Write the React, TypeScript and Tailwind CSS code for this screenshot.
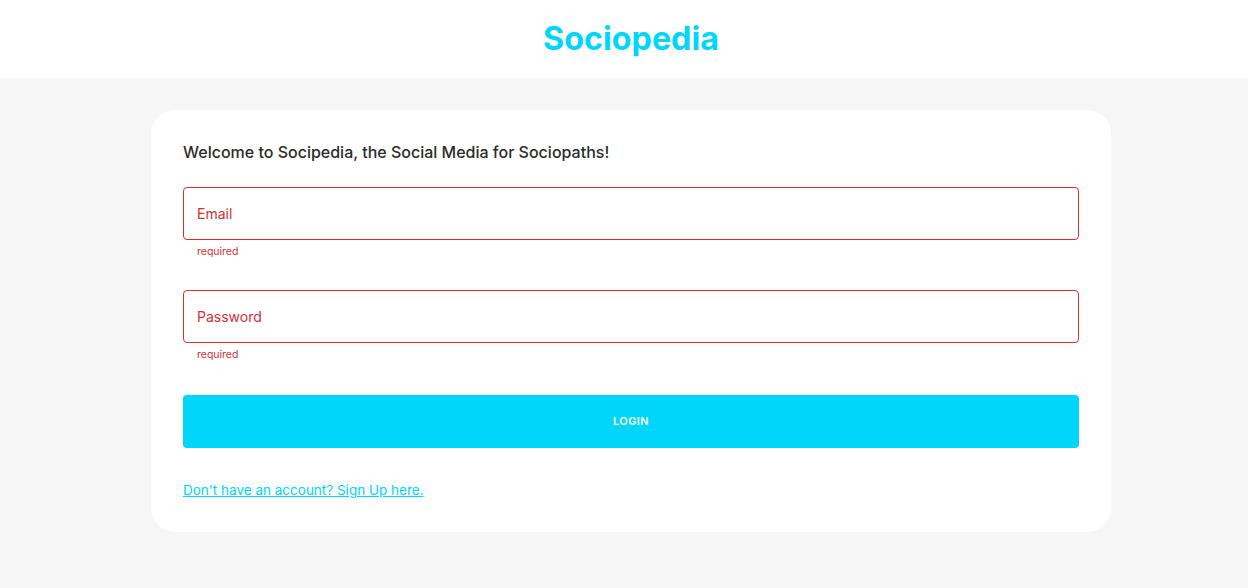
const fontStack = { fontFamily: "Inter, 'Noto Sans', sans-serif" };

const Field = ({ label }: { label: string }) => (
  <div className="flex flex-col">
    <div className="h-[53px] rounded-[4px] border border-[#d32f2f] flex items-center px-[13px]">
      <span className="text-[14px] text-[#d32f2f]">{label}</span>
    </div>
    <span className="mt-[3px] ml-[14px] text-[10.5px] leading-[17px] text-[#d32f2f]">
      required
    </span>
  </div>
);

const App = () => {
  return (
    <div className="min-h-[588px] bg-[#f6f6f6] overflow-hidden" style={fontStack}>
      <header className="bg-white h-[78px]">
        <div className="w-[1262px] h-full flex items-center justify-center">
          <h1 className="text-[32.3px] font-bold text-[#00d5fa]">Sociopedia</h1>
        </div>
      </header>

      <main className="w-[1262px] flex justify-center pt-8">
        <div className="w-[960px] bg-white rounded-3xl p-8">
          <p className="text-[16px] leading-5 font-medium text-[#2b2b2b]">
            Welcome to Socipedia, the Social Media for Sociopaths!
          </p>

          <div className="mt-[25px] flex flex-col gap-[30px]">
            <Field label="Email" />
            <Field label="Password" />
          </div>

          <button className="mt-8 w-full h-[53px] rounded-[4px] bg-[#00d5fa] text-white text-[11px] font-semibold tracking-[0.4px]">
            LOGIN
          </button>

          <a
            href="#"
            className="block mt-8 text-[13.5px] leading-5 text-[#00d5fa] underline"
          >
            Don't have an account? Sign Up here.
          </a>
        </div>
      </main>
    </div>
  );
};

export default App;
